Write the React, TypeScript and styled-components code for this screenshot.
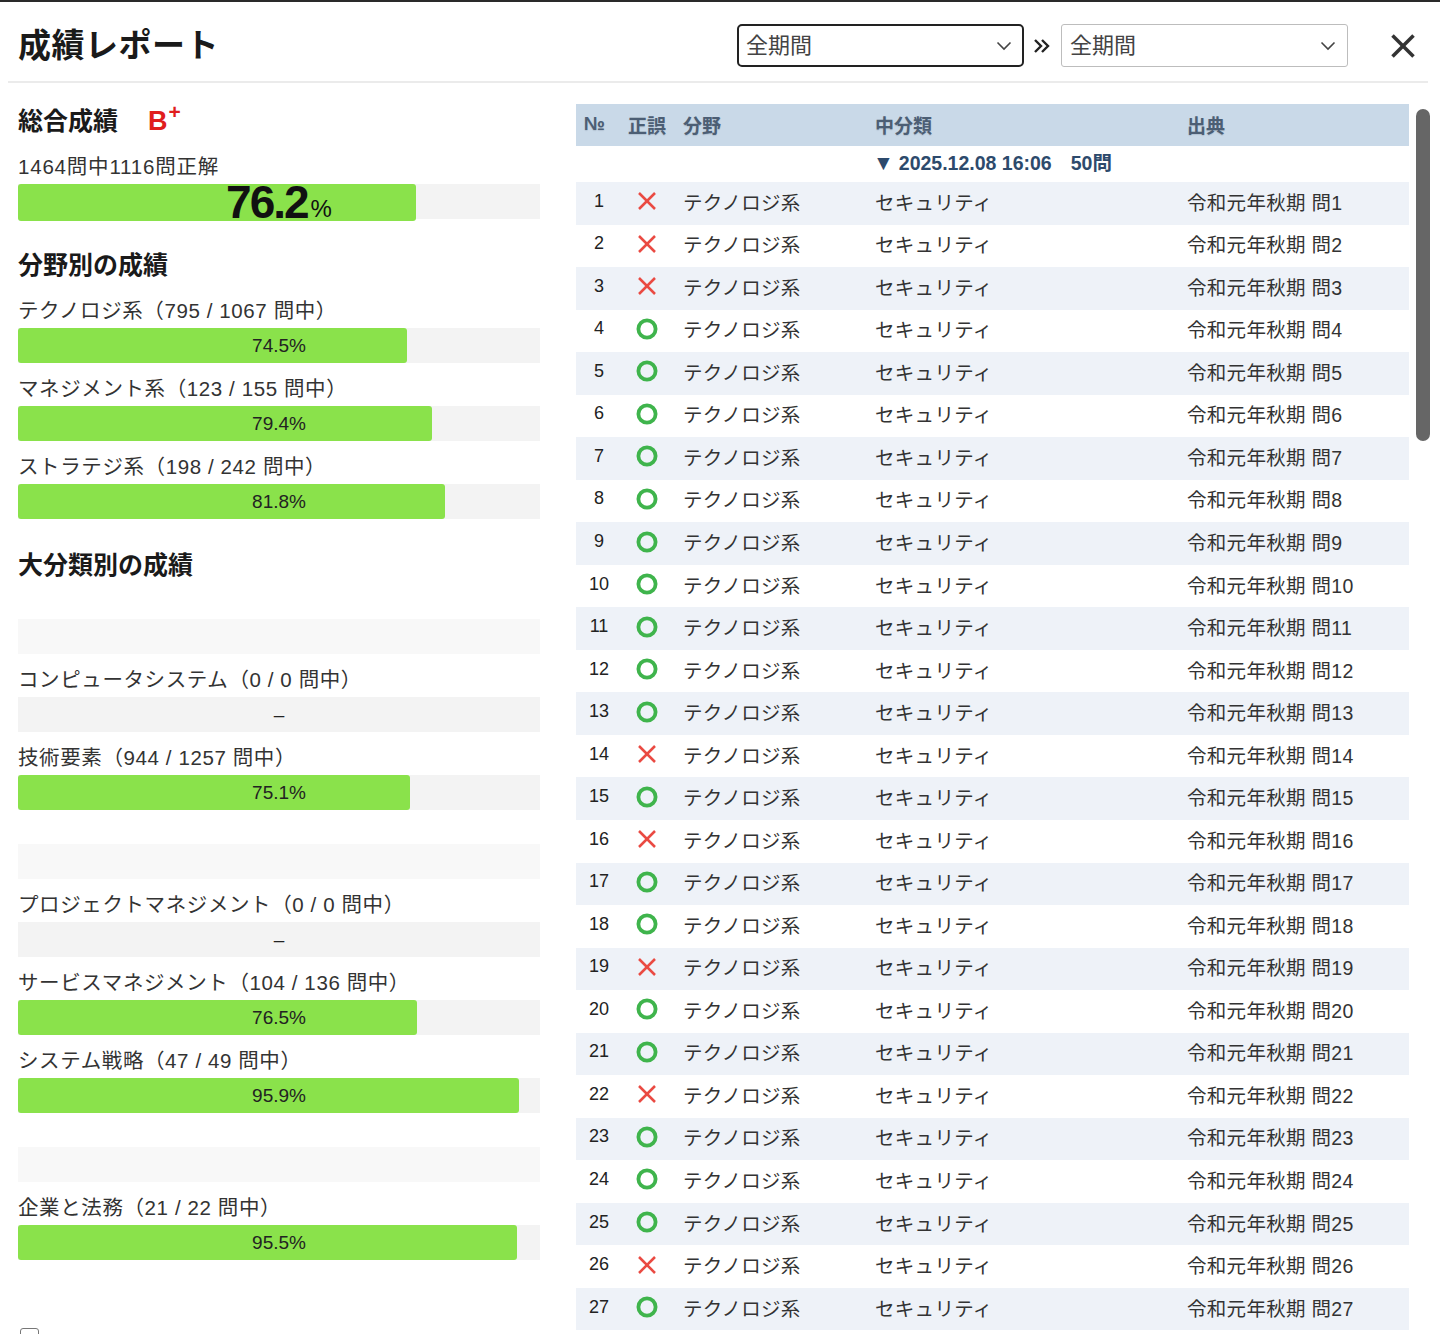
import React from "react";
import styled, { createGlobalStyle } from "styled-components";

const Global = createGlobalStyle`
  html, body { margin: 0; padding: 0; background: #fff; }
  body {
    font-family: "Liberation Sans", "Noto Sans CJK JP", sans-serif;
    color: #222;
    overflow: hidden;
  }
  * { box-sizing: border-box; }
`;

const Modal = styled.div`
  width: 1440px;
  height: 1334px;
  border-top: 2px solid #2a2a2a;
  background: #fff;
  overflow: hidden;
  display: flex;
  flex-direction: column;
`;

const Header = styled.header`
  margin: 0 12px 0 8px;
  height: 81px;
  padding: 8px 13px 0 10px;
  border-bottom: 2px solid #ebebeb;
  display: flex;
  align-items: center;
  justify-content: space-between;
  flex-shrink: 0;
`;

const Title = styled.h1`
  margin: 0;
  font-size: 33px;
  font-weight: 700;
  line-height: 40px;
  color: #1a1a1a;
  letter-spacing: 0.5px;
`;

const Controls = styled.div`
  display: flex;
  align-items: center;
`;

const Select = styled.div<{ $active?: boolean }>`
  width: 287px;
  height: 43px;
  border: ${(p) => (p.$active ? "2px solid #222" : "1px solid #bdbdbd")};
  border-radius: ${(p) => (p.$active ? "5px" : "3px")};
  padding: 0 ${(p) => (p.$active ? "10px" : "11px")} 0 ${(p) => (p.$active ? "7px" : "8px")};
  display: flex;
  align-items: center;
  justify-content: space-between;
  font-size: 22px;
  color: #444;
  background: #fff;
`;

const SelectText = styled.span`
  margin-bottom: 6px;
`;

const Arrow = styled.span`
  display: flex;
  margin: 0 10px 0 9px;
`;

const CloseBtn = styled.button`
  margin-left: 43px;
  border: 0;
  background: none;
  padding: 0;
  display: flex;
  cursor: pointer;
`;

const Body = styled.div`
  display: flex;
  gap: 36px;
  padding: 21px 0 0 18px;
`;

const Left = styled.div`
  width: 522px;
  flex-shrink: 0;
  display: flex;
  flex-direction: column;
`;

const SectionTitle = styled.h2<{ $mt?: number }>`
  margin: ${(p) => p.$mt ?? 0}px 0 0 0;
  font-size: 25px;
  font-weight: 700;
  line-height: 34px;
  color: #1a1a1a;
  display: flex;
  align-items: flex-start;
`;

const Grade = styled.span`
  margin-left: 30px;
  color: #e01d1d;
  font-family: "Liberation Sans", sans-serif;
  font-size: 27px;
  font-weight: 700;
  line-height: 34px;
  sup {
    font-size: 21px;
    vertical-align: top;
    line-height: 16px;
    margin-left: 1px;
  }
`;

const CountText = styled.div`
  margin-top: 15px;
  font-size: 20.5px;
  letter-spacing: 0.8px;
  line-height: 28px;
  color: #333;
`;

const Track = styled.div<{ $faint?: boolean; $mt?: number }>`
  margin-top: ${(p) => p.$mt ?? 0}px;
  height: 35px;
  background: ${(p) => (p.$faint ? "#f8f8f8" : "#f3f3f3")};
  display: grid;
  grid-template: 1fr / 1fr;
`;

const Fill = styled.div`
  grid-area: 1 / 1;
  height: 100%;
  background: #8ae24b;
  border-radius: 3px;
`;

const BarText = styled.div`
  grid-area: 1 / 1;
  display: flex;
  align-items: center;
  justify-content: center;
  font-size: 19px;
  color: #222;
  line-height: 35px;
`;

const BigValue = styled.div`
  grid-area: 1 / 1;
  display: flex;
  align-items: flex-end;
  justify-content: center;
  line-height: 1;
  color: #111;
  b {
    font-size: 46px;
    font-weight: 700;
    letter-spacing: -2px;
    line-height: 37px;
  }
  span {
    font-size: 24px;
    line-height: 24px;
    margin-left: 3px;
  }
`;

const ItemList = styled.div`
  margin-top: 15px;
  display: flex;
  flex-direction: column;
  gap: 12px;
`;

const Item = styled.div`
  display: flex;
  flex-direction: column;
`;

const ItemLabel = styled.div<{ $blank?: boolean }>`
  height: ${(p) => (p.$blank ? 19 : 28)}px;
  margin-bottom: 3px;
  font-size: 20.5px;
  letter-spacing: 0.6px;
  line-height: 28px;
  color: #333;
  white-space: nowrap;
`;

const CheckRow = styled.label`
  margin-top: 68px;
  display: flex;
  align-items: flex-start;
  gap: 8px;
  padding-left: 2px;
`;

const CheckBox = styled.span`
  width: 19px;
  height: 19px;
  border: 1.5px solid #777;
  border-radius: 3px;
`;

const Right = styled.div`
  width: 833px;
  flex-shrink: 0;
  position: relative;
`;

const Scrollbar = styled.div`
  position: absolute;
  top: 5px;
  right: -21px;
  width: 14px;
  height: 332px;
  background: #666;
  border-radius: 7px;
`;

const cols = "46px 50px 192px 312px 1fr";

const HeadRow = styled.div`
  display: grid;
  grid-template-columns: ${cols};
  height: 42px;
  padding-bottom: 2px;
  background: #c9d9e8;
  align-items: center;
  font-size: 19px;
  font-weight: 700;
  color: #4c5e74;
  text-shadow: 0 1px 1px rgba(80, 90, 110, 0.18);
`;

const HeadCell = styled.div<{ $align?: string; $pl?: number }>`
  text-align: ${(p) => p.$align ?? "left"};
  padding-left: ${(p) => p.$pl ?? 11}px;
  white-space: nowrap;
`;

const DateRow = styled.div`
  display: grid;
  grid-template-columns: ${cols};
  height: 36px;
  padding-bottom: 5px;
  align-items: center;
  background: #fff;
`;

const DateText = styled.div`
  grid-column: 4 / -1;
  padding-left: 9px;
  font-size: 19.5px;
  font-weight: 700;
  color: #2d4a6c;
  white-space: nowrap;
  i {
    font-style: normal;
    font-size: 21px;
    margin-right: 5px;
  }
  span { margin-left: 19px; }
`;

const Row = styled.div<{ $odd: boolean }>`
  display: grid;
  grid-template-columns: ${cols};
  height: 42.54px;
  padding-bottom: 4px;
  align-items: center;
  background: ${(p) => (p.$odd ? "#eef2f8" : "#fff")};
  font-size: 19.5px;
  letter-spacing: 0.3px;
  color: #333;
`;

const Cell = styled.div<{ $center?: boolean }>`
  padding-left: ${(p) => (p.$center ? 0 : 11)}px;
  display: flex;
  justify-content: ${(p) => (p.$center ? "center" : "flex-start")};
  white-space: nowrap;
`;

const NumCell = styled(Cell)`
  font-size: 18px;
  letter-spacing: 0;
  color: #222;
`;

const Chevron = () => (
  <svg width="16" height="10" viewBox="0 0 16 10">
    <polyline points="1.5,1.5 8,8 14.5,1.5" fill="none" stroke="#444" strokeWidth="1.6" />
  </svg>
);

const DoubleArrow = () => (
  <svg width="18" height="18" viewBox="0 0 18 18">
    <polyline points="2,3 8,9 2,15" fill="none" stroke="#222" strokeWidth="2.4" />
    <polyline points="9,3 15,9 9,15" fill="none" stroke="#222" strokeWidth="2.4" />
  </svg>
);

const CloseIcon = () => (
  <svg width="24" height="24" viewBox="0 0 24 24">
    <line x1="1.5" y1="1.5" x2="22.5" y2="22.5" stroke="#333" strokeWidth="3.6" />
    <line x1="22.5" y1="1.5" x2="1.5" y2="22.5" stroke="#333" strokeWidth="3.6" />
  </svg>
);

const WrongIcon = () => (
  <svg width="20" height="20" viewBox="0 0 20 20">
    <line x1="2" y1="2" x2="18" y2="18" stroke="#ea4a42" strokeWidth="2.5" />
    <line x1="18" y1="2" x2="2" y2="18" stroke="#ea4a42" strokeWidth="2.5" />
  </svg>
);

const CorrectIcon = () => (
  <svg width="22" height="22" viewBox="0 0 22 22">
    <circle cx="11" cy="11" r="8.6" fill="none" stroke="#3fb44c" strokeWidth="3.8" />
  </svg>
);

type BarItem = { label: string; pct: number | null; faint?: boolean };

const fieldItems: BarItem[] = [
  { label: "テクノロジ系（795 / 1067 問中）", pct: 74.5 },
  { label: "マネジメント系（123 / 155 問中）", pct: 79.4 },
  { label: "ストラテジ系（198 / 242 問中）", pct: 81.8 },
];

const majorItems: BarItem[] = [
  { label: "", pct: null, faint: true },
  { label: "コンピュータシステム（0 / 0 問中）", pct: null },
  { label: "技術要素（944 / 1257 問中）", pct: 75.1 },
  { label: "", pct: null, faint: true },
  { label: "プロジェクトマネジメント（0 / 0 問中）", pct: null },
  { label: "サービスマネジメント（104 / 136 問中）", pct: 76.5 },
  { label: "システム戦略（47 / 49 問中）", pct: 95.9 },
  { label: "", pct: null, faint: true },
  { label: "企業と法務（21 / 22 問中）", pct: 95.5 },
];

const wrongSet = new Set([1, 2, 3, 14, 16, 19, 22, 26]);
const rows = Array.from({ length: 27 }, (_, i) => i + 1);

const BarBlock = ({ item }: { item: BarItem }) => (
  <Item>
    <ItemLabel $blank={item.faint}>{item.label}</ItemLabel>
    <Track $faint={item.faint}>
      {item.pct !== null && <Fill style={{ width: `${item.pct}%` }} />}
      {!item.faint && <BarText>{item.pct !== null ? `${item.pct.toFixed(1)}%` : "–"}</BarText>}
    </Track>
  </Item>
);

export default function App() {
  return (
    <>
      <Global />
      <Modal>
        <Header>
          <Title>成績レポート</Title>
          <Controls>
            <Select $active>
              <SelectText>全期間</SelectText>
              <Chevron />
            </Select>
            <Arrow>
              <DoubleArrow />
            </Arrow>
            <Select>
              <SelectText>全期間</SelectText>
              <Chevron />
            </Select>
            <CloseBtn aria-label="閉じる">
              <CloseIcon />
            </CloseBtn>
          </Controls>
        </Header>
        <Body>
          <Left>
            <SectionTitle>
              総合成績
              <Grade>
                B<sup>+</sup>
              </Grade>
            </SectionTitle>
            <CountText>1464問中1116問正解</CountText>
            <Track $mt={3}>
              <Fill style={{ width: "76.2%" }} />
              <BigValue>
                <b>76.2</b>
                <span>%</span>
              </BigValue>
            </Track>

            <SectionTitle $mt={29}>分野別の成績</SectionTitle>
            <ItemList>
              {fieldItems.map((it, i) => (
                <BarBlock key={i} item={it} />
              ))}
            </ItemList>

            <SectionTitle $mt={29}>大分類別の成績</SectionTitle>
            <ItemList>
              {majorItems.map((it, i) => (
                <BarBlock key={i} item={it} />
              ))}
            </ItemList>

            <CheckRow>
              <CheckBox />
            </CheckRow>
          </Left>

          <Right>
            <HeadRow>
              <HeadCell $pl={8}>№</HeadCell>
              <HeadCell $align="center" $pl={0}>正誤</HeadCell>
              <HeadCell>分野</HeadCell>
              <HeadCell>中分類</HeadCell>
              <HeadCell>出典</HeadCell>
            </HeadRow>
            <DateRow>
              <DateText>
                <i>▼</i>2025.12.08 16:06<span>50問</span>
              </DateText>
            </DateRow>
            {rows.map((n) => (
              <Row key={n} $odd={n % 2 === 1}>
                <NumCell $center>{n}</NumCell>
                <Cell $center>{wrongSet.has(n) ? <WrongIcon /> : <CorrectIcon />}</Cell>
                <Cell>テクノロジ系</Cell>
                <Cell>セキュリティ</Cell>
                <Cell>令和元年秋期 問{n}</Cell>
              </Row>
            ))}
            <Scrollbar />
          </Right>
        </Body>
      </Modal>
    </>
  );
}
